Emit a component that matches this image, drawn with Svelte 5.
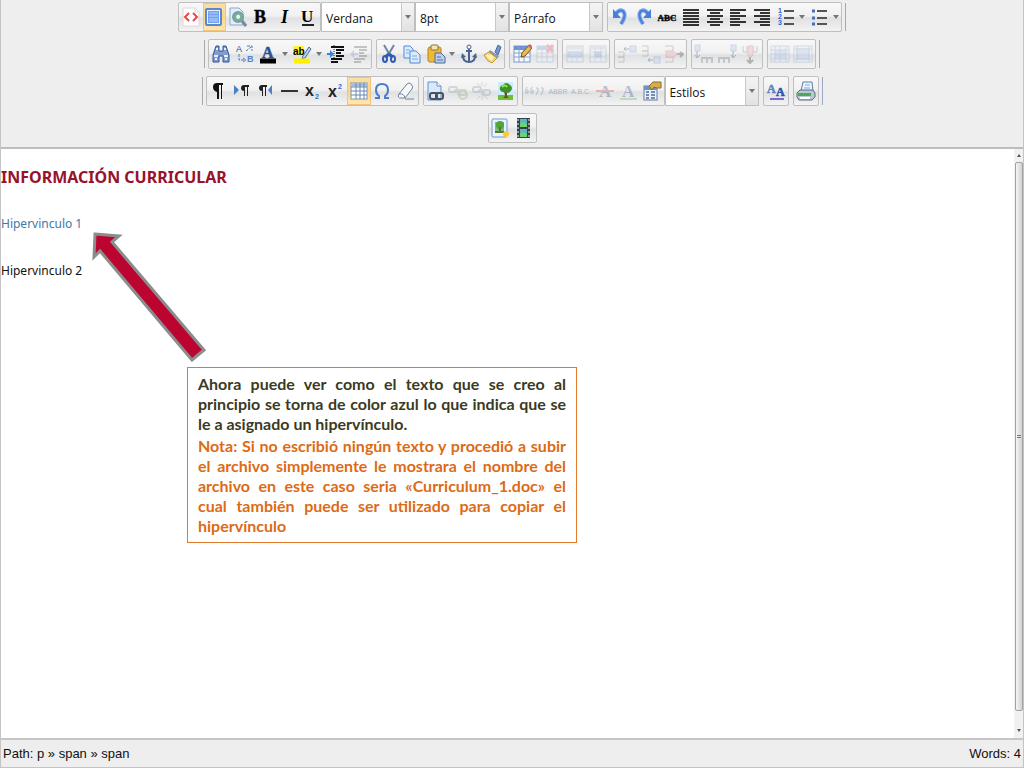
<script>
  const lines = (xs, extra = '') =>
    xs.map(([x, w], i) => `<path d="M${x} ${3 + i * 3}h${w}" stroke="#333" stroke-width="2"/>`).join('') + extra;

  const serif = 'font-family="Liberation Serif, serif" font-weight="bold"';
  const sans = 'font-family="Liberation Sans, sans-serif" font-weight="bold"';
  const grid = '<rect x="2" y="2" width="16" height="16" fill="#f4f9ff" stroke="#7f9cc5"/><path d="M2 4h16" stroke="#6b93d0" stroke-width="4"/><path d="M2 9h16M2 13h16M7 3v15M12 3v15" stroke="#88a3c8"/>';
  const chain = '<g fill="none" stroke="#8e969e" stroke-width="2"><rect x="1" y="6" width="8" height="5" rx="2"/><rect x="10" y="9" width="8" height="5" rx="2"/><path d="M6 9l7 3"/></g>';
  const page = '<path d="M3 1h9l4 4v14h-13z" fill="#d7e9fb" stroke="#5e93d2"/><path d="M12 1v4h4" fill="#fff" stroke="#5e93d2"/>';

  // Symbole der Werkzeugleiste, alle auf 20x20 gezeichnet
  const icons = {
    code: '<path d="M2 1h12l4 4v14H2z" fill="#fff" stroke="#e2d5d5"/><path d="M14 1v4h4" fill="none" stroke="#ddd"/><path d="M8 6l-4 4 4 4M12 6l4 4-4 4" fill="none" stroke="#ee4545" stroke-width="2"/>',
    full: '<rect x="2" y="2" width="15" height="16" rx="1" fill="#e9f2ff" stroke="#5c87cf" stroke-width="2"/><rect x="4" y="4" width="11" height="12" fill="#72a1ef"/><path d="M5 6h9M5 9h9M5 12h9M5 14h9" stroke="#b9d4ff"/>',
    preview: '<path d="M2 1h9l4 4v13H2z" fill="#e3eefb" stroke="#8ca7c8"/><circle cx="10" cy="10" r="5" fill="#6fb48c" stroke="#8199ad" stroke-width="2"/><path d="M8 9q3-3 4 0t-3 3" fill="#e0fff0"/><path d="M14 14l4 5" stroke="#79899d" stroke-width="3"/>',
    bold: `<text x="3" y="16" font-size="18" ${serif} stroke="#111" stroke-width="0.5">B</text>`,
    italic: `<text x="6" y="16" font-size="18" ${serif} font-style="italic">I</text>`,
    underline: `<text x="3" y="15" font-size="17" ${serif}>U</text><path d="M4 18h12" stroke="#222" stroke-width="2"/>`,
    undo: '<path d="M6 7q3-5 7-3 4 4-2 13" fill="none" stroke="#7da6ea" stroke-width="4"/><path d="M6 7q3-5 7-3 4 4-2 13" fill="none" stroke="#4a7ed8" stroke-width="2"/><path d="M3 2v9h8z" fill="#4a7ed8"/>',
    redo: '<path d="M14 7q-3-5-7-3-4 4 2 13" fill="none" stroke="#7da6ea" stroke-width="4"/><path d="M14 7q-3-5-7-3-4 4 2 13" fill="none" stroke="#4a7ed8" stroke-width="2"/><path d="M17 2v9H9z" fill="#4a7ed8"/>',
    strike: `<text x="10" y="14" font-size="9" text-anchor="middle" ${serif} stroke="#111" stroke-width="0.4">ABC</text><path d="M1 11h18" stroke="#111"/>`,
    justify: lines([[2, 16], [2, 16], [2, 16], [2, 16], [2, 16], [2, 16]]),
    center: lines([[2, 16], [5, 10], [2, 16], [5, 10], [2, 16], [5, 10]]),
    left: lines([[2, 16], [2, 10], [2, 16], [2, 10], [2, 16], [2, 10]]),
    right: lines([[2, 16], [8, 10], [2, 16], [8, 10], [2, 16], [8, 10]]),
    ol: `<path d="M8 4h10M8 11h10M8 17h10" stroke="#555" stroke-width="2"/><g fill="#3465c9" font-size="7" ${sans}><text x="2" y="6">1</text><text x="2" y="12">2</text><text x="2" y="18">3</text></g>`,
    ul: '<path d="M8 4h10M8 11h10M8 17h10" stroke="#555" stroke-width="2"/><path d="M3 4h3M3 11h3M3 17h3" stroke="#466eb5" stroke-width="3"/>',
    find: '<path d="M5 2h3v5h4V2h3l3 9v7h-6v-6H8v6H2v-7z" fill="#829ccb" stroke="#30559c"/><path d="M3 12h4M13 12h4M5 5h2M13 5h2M4 15h2M14 15h2" stroke="#e6efff" stroke-width="2"/>',
    replace: `<text x="1" y="8" font-size="9" fill="#385076" font-family="Liberation Sans">A</text><text x="12" y="18" font-size="9" fill="#5680cf" ${sans}>B</text><path d="M4 10v6h6M11 7l5-4M12 2h5v5M8 14l3 2-3 2" fill="none" stroke="#4e77bd" stroke-dasharray="3 1"/>`,
    color: `<text x="4" y="14" font-size="16" fill="#294f91" stroke="#294f91" stroke-width="0.5" ${serif}>A</text><path d="M2 17h16" stroke="#000" stroke-width="5"/>`,
    mark: `<rect x="1" y="2" width="11" height="10" fill="#fff338"/><text x="1" y="11" font-size="10" ${sans}>ab</text><path d="M11 12l6-9 2 2-6 9-3 1z" fill="#b7d1f1" stroke="#526b91"/><path d="M2 17h16" stroke="#fff000" stroke-width="5"/>`,
    indent: '<path d="M5 3h13M10 6h8M10 9h5M10 12h8M5 15h11M5 18h7" stroke="#111" stroke-width="2"/><path d="M8 1v18" stroke="#222" stroke-dasharray="1 1"/><path d="M1 9h3V6l4 4-4 4v-3H1z" fill="#3d80dc"/>',
    outdent: '<path d="M5 3h13M10 6h8M10 9h5M10 12h8M5 15h11M5 18h7" stroke="#555" stroke-width="2"/><path d="M9 9H5V6l-4 4 4 4v-3h4z" fill="#6f95c8"/>',
    cut: '<path d="M5 1l7 12M15 1L8 13" stroke="#6f83a5" stroke-width="2"/><path d="M10 10l-4 3M10 10l4 3" stroke="#315cb4" stroke-width="3"/><g fill="none" stroke="#315cb4" stroke-width="2"><ellipse cx="6" cy="15" rx="2" ry="3"/><ellipse cx="14" cy="15" rx="2" ry="3"/></g>',
    copy: '<g fill="#dcecff" stroke="#5789d2"><path d="M2 2h6l3 3v9H2z"/><path d="M8 7h6l4 4v8H8z"/></g><path d="M4 6h4M4 9h3M10 12h5M10 15h6" stroke="#78a7e2"/>',
    paste: '<rect x="2" y="3" width="13" height="15" rx="2" fill="#edb936" stroke="#b38325"/><rect x="5" y="1" width="7" height="5" rx="1" fill="#f4e6b4" stroke="#8c7139"/><path d="M9 9h6l4 4v6H9z" fill="#b9cdec" stroke="#4e6b9c"/><path d="M11 13h4M11 16h6" stroke="#5577ae"/>',
    anchor: '<circle cx="10" cy="3" r="2" fill="none" stroke="#4a628f"/><path d="M10 5v13M7 7h6" stroke="#4a628f" stroke-width="2"/><path d="M4 12q0 6 6 6t6-6" fill="none" stroke="#4a628f" stroke-width="2"/><path d="M2 14l1-5 4 4zM18 14l-1-5-4 4z" fill="#4a628f"/>',
    clean: '<path d="M13 8l3-7 3 2-3 8z" fill="#7295cf" stroke="#536c9b"/><path d="M8 6l9 6-2 3-9-6z" fill="#8798b4"/><path d="M7 8l8 6-5 5q-5-1-8-8z" fill="#f4d77e" stroke="#c4993a"/><path d="M5 11l5 5M8 11l3 3" stroke="#fff5c4" stroke-width="2"/>',
    table: grid + '<path d="M9 13l1-4 7-8 3 3-7 8z" fill="#edbd52" stroke="#6e5024"/><path d="M17 1l3 3" stroke="#cd6a6a" stroke-width="3"/>',
    tableDel: grid + '<path d="M12 1l6 7M18 1l-6 7" stroke="#e33b55" stroke-width="3"/>',
    rowProps: '<rect x="2" y="2" width="16" height="16" fill="#e7f0ff" stroke="#809ab9"/><path d="M2 4h16" stroke="#b8c9dd" stroke-width="3"/><rect x="3" y="8" width="14" height="5" fill="#91b6e9" stroke="#668bc0"/><path d="M7 13v5M12 13v5" stroke="#9eb3cd"/>',
    cellProps: '<rect x="2" y="2" width="16" height="16" fill="#e7f0ff" stroke="#809ab9"/><path d="M2 4h16" stroke="#b8c9dd" stroke-width="3"/><path d="M2 8h16M2 13h16M7 3v15M13 3v15" stroke="#9eb3cd"/><rect x="7" y="8" width="6" height="5" fill="#79a5e6" stroke="#668bc0"/>',
    rowBefore: '<path d="M1 8h6v5H1M7 13v5H1M1 13h6" fill="none" stroke="#777"/><rect x="13" y="2" width="6" height="6" fill="#a9c8f4" stroke="#6e91ca"/><path d="M12 5H7M9 3L7 5l2 2" fill="none" stroke="#333"/>',
    rowAfter: '<path d="M1 2h6v5H1M7 7v5H1M1 7h6" fill="none" stroke="#777"/><rect x="13" y="13" width="6" height="6" fill="#a9c8f4" stroke="#6e91ca"/><path d="M12 16H7M9 14l-2 2 2 2" fill="none" stroke="#333"/>',
    rowDel: '<path d="M1 2h8v5M1 18h8v-5M1 7h8M1 13h8" fill="none" stroke="#777"/><path d="M2 8h8l4 2-4 3H2z" fill="#f3a6b0" stroke="#d3697a"/><path d="M13 10h6M16 8l3 2-3 3" fill="none" stroke="#333" stroke-width="2"/>',
    colBefore: '<rect x="1" y="1" width="5" height="6" fill="#a9c8f4" stroke="#6e91ca"/><path d="M3 7v6M1 11l2 3 3-3" fill="none" stroke="#333"/><path d="M8 19v-5h10v5M13 14v5" fill="none" stroke="#777" stroke-width="2"/>',
    colAfter: '<rect x="14" y="1" width="5" height="6" fill="#a9c8f4" stroke="#6e91ca"/><path d="M16 7v6M14 11l2 3 3-3" fill="none" stroke="#333"/><path d="M2 19v-5h10v5M7 14v5" fill="none" stroke="#777" stroke-width="2"/>',
    colDel: '<path d="M3 2v6h14V2M7 2v6M13 2v6" fill="none" stroke="#777"/><path d="M8 2h5v9l-3 3-2-3z" fill="#f3a6b0" stroke="#d3697a"/><path d="M10 13v6M7 16l3 3 3-3" fill="none" stroke="#333" stroke-width="2"/>',
    split: '<rect x="1" y="2" width="18" height="16" fill="#e7f0ff" stroke="#8aa4c5"/><rect x="5" y="6" width="11" height="9" fill="#a9c7f0"/><path d="M1 6h18M1 10h18M1 15h18M5 2v16M10 2v16M16 2v16" stroke="#7c99c2"/>',
    merge: '<rect x="1" y="2" width="18" height="16" fill="#e7f0ff" stroke="#8aa4c5"/><path d="M1 5h18M1 15h18M4 2v16M16 2v16" stroke="#8aa4c5"/><rect x="4" y="5" width="12" height="10" fill="#a9c7f0" stroke="#7499cc"/>',
    pilcrow: '<path d="M15 2H9Q5 2 5 6t4 5v7h2V4h2v14h1V4h1z" fill="#111"/>',
    ltr: '<path d="M2 4l5 5-5 5z" fill="#4b7fc8"/><path d="M17 4h-5Q9 4 9 7t3 3v5h1V6h2v9h1V6h1z" fill="#222"/>',
    rtl: '<path d="M17 4l-4 5 4 5z" fill="#4b7fc8"/><path d="M12 4H7Q4 4 4 7t3 3v5h1V6h2v9h1V6h1z" fill="#222"/>',
    hr: '<path d="M2 10h17" stroke="#333" stroke-width="2"/>',
    sub: `<text x="3" y="15" font-size="16" ${sans} fill="#222">x</text><text x="13" y="18" font-size="7" fill="#3269ca" ${sans}>2</text>`,
    sup: `<text x="3" y="16" font-size="16" ${sans} fill="#222">x</text><text x="13" y="8" font-size="7" fill="#3269ca" ${sans}>2</text>`,
    guides: '<rect x="2" y="2" width="16" height="16" fill="#fff" stroke="#8094b5"/><path d="M3 4h15" stroke="#a4bcde" stroke-width="3"/><path d="M2 6h16M2 10h16M2 14h16M7 2v16M11 2v16M15 2v16" stroke="#6989b5"/>',
    omega: '<path d="M3 17h4v-2q-3-2-3-6 0-6 6-6t6 6q0 4-3 6v2h4" fill="none" stroke="#4a7bd0" stroke-width="2"/>',
    erase: '<path d="M3 13l8-10q2-2 4 0 3 3 1 5l-7 9H5q-4 0-2-4z" fill="#f5f8fb" stroke="#718297"/><path d="M3 13q5-1 6 4M9 18h9" fill="none" stroke="#718297"/>',
    pageLink: page + '<g fill="none" stroke="#4b5157" stroke-width="2"><rect x="5" y="12" width="7" height="6" rx="2"/><rect x="11" y="12" width="7" height="6" rx="2"/></g>',
    link: chain + '<circle cx="15" cy="14" r="4" fill="none" stroke="#6fba57" stroke-width="2"/>',
    unlink: chain + '<path d="M5 2l3 4M10 1v4M15 2l-3 4M5 18l3-3M10 19v-4M16 18l-4-3" stroke="#999"/>',
    image: '<rect x="3" y="1" width="15" height="18" fill="#c9ecff"/><rect x="3" y="14" width="15" height="5" fill="#70bd3a"/><path d="M9 10h3v5l2 2H8l2-2z" fill="#71501d"/><path d="M5 9q-1-4 3-5 3-4 7 0 4 3 0 7-3 2-5 0-3 1-5-2z" fill="#3b9227"/><path d="M7 6q3-3 5 0" fill="none" stroke="#a6db50" stroke-width="2"/>',
    quote: '<path d="M3 6q-2 2-1 6h2V9H3M8 6q-2 2-1 6h2V9H8M12 7h2v3l-2 4M17 7h2v3l-2 4" fill="none" stroke="#3d5e87"/>',
    abbr: `<text x="10" y="13" font-size="7" text-anchor="middle" fill="#243d60" font-family="Liberation Sans">ABBR</text>`,
    acro: `<text x="10" y="13" font-size="7" text-anchor="middle" fill="#243d60" font-family="Liberation Sans">A.B.C.</text>`,
    del: `<text x="4" y="16" font-size="17" fill="#2c4c7c" ${serif}>A</text><path d="M1 10h18" stroke="#df3333" stroke-width="2"/>`,
    ins: `<text x="4" y="16" font-size="17" fill="#2c4c7c" ${serif}>A</text><path d="M2 18h17" stroke="#5db653" stroke-width="2"/>`,
    attribs: '<rect x="2" y="5" width="13" height="14" fill="#e8f0fa" stroke="#657fa4"/><path d="M2 7h13" stroke="#7092c1" stroke-width="4"/><path d="M4 11h3M9 11h4M4 14h3M9 14h4M4 17h3M9 17h4" stroke="#738cb0" stroke-width="2"/><path d="M7 5l4-4h8v6h-4l-3-1-2 3z" fill="#d8ad45" stroke="#8e6b2a"/>',
    styleprops: `<text x="1" y="12" font-size="12" fill="#6082bf" stroke="#6082bf" stroke-width="0.5" ${serif}>A</text><text x="10" y="15" font-size="12" fill="#2855aa" stroke="#2855aa" stroke-width="0.5" ${serif}>A</text><path d="M4 18h14" stroke="#7b6ad0" stroke-width="2"/>`,
    print: '<path d="M7 1h9l1 9H5z" fill="#eaf3ff" stroke="#5f7ca5"/><path d="M9 4h5M8 7h6" stroke="#8ba8cf"/><path d="M4 9h13l2 3v4l-3 3H3l-2-3v-4z" fill="#b9c8d4" stroke="#5c6b7c"/><path d="M2 12h13v3H2z" fill="#49a956"/><path d="M4 17h10" stroke="#fff" stroke-width="2"/>',
    photo: '<rect x="2" y="1" width="15" height="18" rx="1" fill="#eaf4ff" stroke="#6b9bd5"/><rect x="5" y="4" width="9" height="11" fill="#78bd7b"/><circle cx="10" cy="7" r="4" fill="#53a535"/><path d="M10 9v6M5 14h9" stroke="#557833" stroke-width="2"/><circle cx="16" cy="16" r="3" fill="#ffc83b"/>',
    film: '<path d="M3 0h13v20H3z" fill="#374047"/><path d="M6 1h7v8H6zM6 11h7v8H6z" fill="#58b6c5"/><path d="M6 6q4-4 7 1v2H6zM6 16q4-4 7 1v2H6z" fill="#6ed46a"/><path d="M4 1v18M15 1v18" stroke="#eee" stroke-dasharray="2 2"/>'
  };

  const labels = {
    code: 'HTML', full: 'Pantalla completa', preview: 'Vista previa', bold: 'Negrita', italic: 'Cursiva',
    underline: 'Subrayado', undo: 'Deshacer', redo: 'Rehacer', strike: 'Tachado', find: 'Buscar',
    replace: 'Reemplazar', cut: 'Cortar', copy: 'Copiar', paste: 'Pegar', anchor: 'Ancla', image: 'Imagen', print: 'Imprimir'
  };

  // "|" nach dem Namen = Pfeil daneben, "-" davor = deaktiviert
  const rows = [
    {
      sets: [
        [
          { width: 143, items: 'code full preview bold italic underline' },
          { select: 'Fuente', value: 'Verdana' },
          { select: 'Tamaño', value: '8pt' },
          { select: 'Formato', value: 'Párrafo' }
        ],
        [{ width: 235, items: 'undo redo strike justify center left right ol| ul|' }]
      ],
      end: true
    },
    {
      start: true,
      sets: [
        [{ width: 164, items: 'find replace color| mark| indent -outdent' }],
        [{ width: 129, items: 'cut copy paste| anchor clean' }],
        [{ width: 49, items: 'table -tableDel' }],
        [{ width: 48, items: '-rowProps -cellProps' }],
        [{ width: 73, items: '-rowBefore -rowAfter -rowDel' }],
        [{ width: 72, items: '-colBefore -colAfter -colDel' }],
        [{ width: 49, items: '-split -merge' }]
      ],
      end: true
    },
    {
      start: true,
      sets: [
        [{ width: 213, items: 'pilcrow ltr rtl hr sub sup guides omega erase' }],
        [{ width: 95, items: 'pageLink -link -unlink image' }],
        [{ width: 143, items: '-quote -abbr -acro -del -ins attribs' }, { select: 'Estilos', value: 'Estilos' }],
        [{ width: 26, items: 'styleprops' }],
        [{ width: 26, items: 'print' }]
      ],
      end: true
    },
    { sets: [[{ width: 49, items: 'photo film' }]] }
  ];

  const parse = (items) =>
    items.split(' ').map((s) => ({
      name: s.replace(/[-|]/g, ''),
      disabled: s.startsWith('-'),
      menu: s.endsWith('|')
    }));

  let active = $state({ full: true, guides: true });
</script>

<div class="editor">
  <div class="toolbar" role="toolbar" aria-label="Formato">
    {#each rows as row}
      <div class="row">
        {#if row.start}<span class="sep"></span>{/if}
        {#each row.sets as set}
          <div class="set">
            {#each set as part}
              {#if part.select}
                <div class="list">
                  <select aria-label={part.select}><option>{part.value}</option></select>
                  <span class="drop"><i class="caret"></i></span>
                </div>
              {:else}
                <div class="group" style="width: {part.width}px">
                  {#each parse(part.items) as item}
                    <button
                      class="tool"
                      class:active={active[item.name]}
                      type="button"
                      disabled={item.disabled}
                      aria-label={labels[item.name] ?? item.name}
                      onclick={() => (active[item.name] = !active[item.name])}
                    >
                      <svg viewBox="0 0 20 20" width="20" height="20">{@html icons[item.name]}</svg>
                    </button>
                    {#if item.menu}
                      <button class="more" type="button" aria-label="Más opciones"><i class="caret"></i></button>
                    {/if}
                  {/each}
                </div>
              {/if}
            {/each}
          </div>
        {/each}
        {#if row.end}<span class="sep end"></span>{/if}
      </div>
    {/each}
  </div>

  <div class="body">
    <main class="content">
      <h1>INFORMACIÓN CURRICULAR</h1>
      <p><a href="#hipervinculo-1">Hipervinculo 1</a></p>
      <p>Hipervinculo 2</p>

      <svg class="arrow" viewBox="0 0 118 132" width="118" height="132" aria-hidden="true">
        <path d="M5 4L29 6L22 12L114 120L102 130L10 21L4 27Z" fill="#bb0530" stroke="#8c8c8c" stroke-width="3" />
      </svg>

      <aside class="callout">
        <p>Ahora puede ver como el texto que se creo al principio se torna de color azul lo que indica que se le a asignado un hipervínculo.</p>
        <p class="note">Nota: Si no escribió ningún texto y procedió a subir el archivo simplemente le mostrara el nombre del archivo en este caso seria «Curriculum_1.doc» el cual también puede ser utilizado para copiar el hipervínculo</p>
      </aside>
    </main>

    <div class="scrollbar" aria-hidden="true">
      <i class="up"></i>
      <div class="thumb"><span></span></div>
      <i class="down"></i>
    </div>
  </div>

  <footer class="status">
    <span>Path: p » span » span</span>
    <span>Words: 4</span>
  </footer>
</div>

<style>
  :global(body) {
    margin: 0;
    background: #fff;
  }

  .editor {
    box-sizing: border-box;
    min-height: 100vh;
    display: flex;
    flex-direction: column;
    border: 1px solid #c4c4c4;
    border-top: none;
    font-family: "Liberation Sans", Arial, sans-serif;
    color: #111;
  }

  .toolbar {
    display: flex;
    flex-direction: column;
    gap: 7px;
    padding: 2px 0 4px;
    background: #eee;
    border-bottom: 2px solid #bdbdbd;
  }

  .row {
    display: flex;
    justify-content: center;
    gap: 4px;
  }

  .set {
    display: flex;
  }

  .sep {
    width: 1px;
    margin: 1px -1px 1px 0;
    background: #a9a9a9;
  }

  .sep.end {
    margin: 1px 0 1px -1px;
    background: #9aa9c4;
  }

  .group {
    box-sizing: border-box;
    height: 30px;
    display: flex;
    border: 1px solid #bfbfbf;
    border-radius: 2px;
    background: linear-gradient(#f8f8f8 0%, #f1f1f1 45%, #e0e1e3 55%, #f3f3f3 100%);
  }

  .tool,
  .more {
    padding: 0;
    border: none;
    background: none;
    display: flex;
    align-items: center;
    justify-content: center;
    min-width: 0;
  }

  .tool {
    flex: 1;
  }

  .more {
    width: 10px;
  }

  .tool svg {
    flex: none;
  }

  .tool.active {
    background: linear-gradient(#fbe0a9, #f9d58a 50%, #fde9b8);
    box-shadow: inset 0 0 0 1px #f3c37c;
  }

  .tool:disabled svg {
    opacity: 0.3;
  }

  .caret {
    border: 3px solid transparent;
    border-top: 4px solid #777;
    border-bottom: none;
  }

  .list {
    box-sizing: border-box;
    width: 94px;
    height: 30px;
    display: flex;
    border: 1px solid #bfbfbf;
    background: #fff;
  }

  .list select {
    appearance: none;
    flex: 1;
    min-width: 0;
    border: none;
    padding: 2px 0 0 4px;
    background: #fff;
    color: #111;
    font: 12px "Open Sans", Tahoma, sans-serif;
  }

  .drop {
    width: 12px;
    display: flex;
    align-items: center;
    justify-content: center;
    border-left: 1px solid #c8c8c8;
    background: linear-gradient(#f4f4f4, #e2e2e2);
  }

  .body {
    flex: 1;
    display: flex;
    background: #fff;
  }

  .content {
    flex: 1;
    position: relative;
    font-family: "Noto Sans", Verdana, sans-serif;
  }

  h1 {
    margin: 16px 0 23px;
    font-size: 16px;
    line-height: 24px;
    color: #98122c;
  }

  .content > p {
    margin: 0 0 23px;
    font-size: 12px;
    line-height: 24px;
  }

  a {
    color: #4079a8;
    text-decoration: none;
  }

  .arrow {
    position: absolute;
    left: 89px;
    top: 81px;
  }

  .callout {
    position: absolute;
    box-sizing: border-box;
    left: 186px;
    top: 218px;
    width: 390px;
    padding: 6px 10px;
    border: 1px solid #e07b2c;
    background: #fff;
    font: bold 16px/20px Lato, Calibri, sans-serif;
    color: #3b3a22;
    text-align: justify;
  }

  .callout p {
    margin: 0;
  }

  .callout .note {
    margin-top: 2px;
    color: #dd6b16;
  }

  .scrollbar {
    width: 9px;
    display: flex;
    flex-direction: column;
    align-items: center;
    background: #f1f1f1;
  }

  .up,
  .down {
    height: 0;
    border: 2px solid transparent;
  }

  .up {
    margin: 5px 0;
    border-top: none;
    border-bottom: 3px solid #555;
  }

  .down {
    margin: 18px 0 6px;
    border-bottom: none;
    border-top: 3px solid #555;
  }

  .thumb {
    box-sizing: border-box;
    width: 8px;
    flex: 1;
    display: flex;
    align-items: center;
    justify-content: center;
    border: 1px solid #a2a2a2;
    border-radius: 2px;
    background: linear-gradient(90deg, #f5f5f5, #d2d2d2);
  }

  .thumb span {
    width: 4px;
    height: 1px;
    border-top: 1px solid #777;
    border-bottom: 1px solid #777;
  }

  .status {
    display: flex;
    justify-content: space-between;
    padding: 0 2px;
    border-top: 2px solid #c6c6c6;
    background: #eee;
    font-size: 13px;
    line-height: 27px;
  }
</style>
